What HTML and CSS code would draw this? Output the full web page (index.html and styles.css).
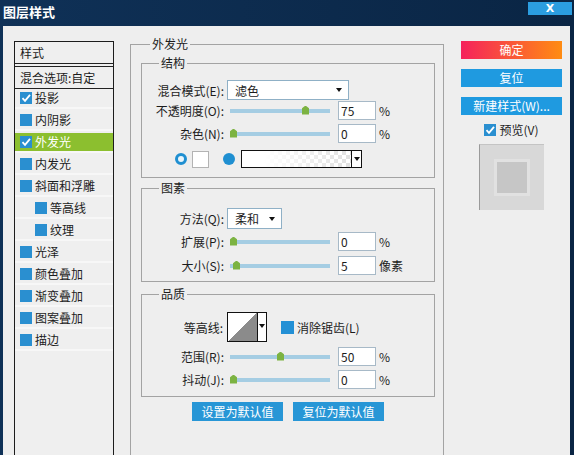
FILE: index.html
```html
<!DOCTYPE html>
<html lang="zh-CN">
<head>
<meta charset="utf-8">
<title>图层样式</title>
<link rel="stylesheet" href="styles.css">
</head>
<body>
<div class="window">
  <div class="titlebar">
    <span class="title">图层样式</span>
    <span class="close">X</span>
  </div>
  <div class="dialog">
    <div class="styles-panel">
      <div class="sp-head">样式</div>
      <div class="sp-sub">混合选项:自定</div>
      <ul class="sp-list">
        <li class="sp-item"><span class="cb"><svg viewBox="0 0 12 12"><path d="M2.5 6.2 L5 8.8 L10 2.8" fill="none" stroke="#fff" stroke-width="1.8"/></svg></span>投影</li>
        <li class="sp-item"><span class="cb"></span>内阴影</li>
        <li class="sp-item active"><span class="cb"><svg viewBox="0 0 12 12"><path d="M2.5 6.2 L5 8.8 L10 2.8" fill="none" stroke="#fff" stroke-width="1.8"/></svg></span>外发光</li>
        <li class="sp-item"><span class="cb"></span>内发光</li>
        <li class="sp-item"><span class="cb"></span>斜面和浮雕</li>
        <li class="sp-item sub"><span class="cb"></span>等高线</li>
        <li class="sp-item sub"><span class="cb"></span>纹理</li>
        <li class="sp-item"><span class="cb"></span>光泽</li>
        <li class="sp-item"><span class="cb"></span>颜色叠加</li>
        <li class="sp-item"><span class="cb"></span>渐变叠加</li>
        <li class="sp-item"><span class="cb"></span>图案叠加</li>
        <li class="sp-item"><span class="cb"></span>描边</li>
      </ul>
    </div>

    <div class="main">
      <fieldset class="group outer">
        <legend class="lg-outer">外发光</legend>

        <fieldset class="group g-struct">
          <legend class="lg-inner">结构</legend>
          <div class="row r1">
            <span class="lbl">混合模式(E):</span>
            <div class="select s-blend"><span>滤色</span><i class="arrow"></i></div>
          </div>
          <div class="row r2">
            <span class="lbl">不透明度(O):</span>
            <div class="slider"><div class="track"></div><i class="thumb" style="left:72px"></i></div>
            <div class="num">75</div><span class="unit">%</span>
          </div>
          <div class="row r3">
            <span class="lbl">杂色(N):</span>
            <div class="slider"><div class="track"></div><i class="thumb" style="left:0px"></i></div>
            <div class="num">0</div><span class="unit">%</span>
          </div>
          <div class="row r4">
            <span class="ring"></span>
            <span class="swatch"></span>
            <span class="dot"></span>
            <div class="gradbox"><div class="grad-fill"></div><div class="grad-drop"><i class="arrow"></i></div></div>
          </div>
        </fieldset>

        <fieldset class="group g-elem">
          <legend class="lg-inner">图素</legend>
          <div class="row e1">
            <span class="lbl">方法(Q):</span>
            <div class="select s-method"><span>柔和</span><i class="arrow"></i></div>
          </div>
          <div class="row e2">
            <span class="lbl">扩展(P):</span>
            <div class="slider"><div class="track"></div><i class="thumb" style="left:0px"></i></div>
            <div class="num">0</div><span class="unit">%</span>
          </div>
          <div class="row e3">
            <span class="lbl">大小(S):</span>
            <div class="slider"><div class="track"></div><i class="thumb" style="left:3px"></i></div>
            <div class="num">5</div><span class="unit">像素</span>
          </div>
        </fieldset>

        <fieldset class="group g-qual">
          <legend class="lg-inner">品质</legend>
          <div class="row q1">
            <span class="lbl lbl-c">等高线:</span>
            <div class="contour"><div class="contour-graph"></div><div class="contour-drop"><i class="arrow"></i></div></div>
            <span class="cb cb13"></span><span class="cb-text">消除锯齿(L)</span>
          </div>
          <div class="row q2">
            <span class="lbl">范围(R):</span>
            <div class="slider"><div class="track"></div><i class="thumb" style="left:47px"></i></div>
            <div class="num">50</div><span class="unit">%</span>
          </div>
          <div class="row q3">
            <span class="lbl">抖动(J):</span>
            <div class="slider"><div class="track"></div><i class="thumb" style="left:0px"></i></div>
            <div class="num">0</div><span class="unit">%</span>
          </div>
        </fieldset>

        <div class="defaults">
          <span class="btn-d">设置为默认值</span>
          <span class="btn-d">复位为默认值</span>
        </div>
      </fieldset>
    </div>

    <div class="side">
      <span class="btn-r ok">确定</span>
      <span class="btn-r">复位</span>
      <span class="btn-r last">新建样式(W)...</span>
      <div class="preview-check"><span class="cb"><svg viewBox="0 0 12 12"><path d="M2.5 6.2 L5 8.8 L10 2.8" fill="none" stroke="#fff" stroke-width="1.8"/></svg></span>预览(V)</div>
      <div class="preview"><div class="preview-inner"></div></div>
    </div>
  </div>
</div>
</body>
</html>
```

FILE: styles.css
```css
* { box-sizing: border-box; margin: 0; padding: 0; }

body {
  width: 574px;
  height: 455px;
  overflow: hidden;
  background: #0b2746;
  font-family: "Noto Sans CJK SC", "Noto Sans", sans-serif;
  font-size: 12px;
  color: #1c1c1c;
}

.window {
  width: 574px;
  height: 455px;
  display: flex;
  flex-direction: column;
  background: linear-gradient(to right, #0f3157, #0a2544);
  overflow: hidden;
}

.titlebar {
  height: 26px;
  flex: none;
  display: flex;
  justify-content: space-between;
  align-items: flex-start;
  padding: 0 2px 0 3px;
}

.title {
  color: #fff;
  font-weight: bold;
  font-size: 13px;
  line-height: 24px;
}

.close {
  margin-top: 2px;
  width: 44px;
  height: 13px;
  background: #2b9de0;
  color: #fff;
  font-family: "DejaVu Sans", sans-serif;
  font-weight: bold;
  font-size: 11px;
  line-height: 13px;
  text-align: center;
}

.dialog {
  flex: 1;
  margin: 0 4px 0 3px;
  background: #eeeeee;
  display: flex;
  align-items: flex-start;
  padding: 10px 0 0 11px;
  overflow: hidden;
}

/* left style list */
.styles-panel {
  flex: none;
  width: 100px;
  height: 460px;
  margin-top: 5px;
  border: 1px solid #1c1c1c;
  background: #efefef;
}

.sp-head {
  height: 22px;
  line-height: 21px;
  padding-left: 5px;
  border-bottom: 1px solid #222;
}

.sp-sub {
  margin-top: 2px;
  height: 23px;
  line-height: 21px;
  padding-left: 5px;
  border-top: 1px solid #222;
  border-bottom: 1px solid #222;
}

.sp-list { list-style: none; }

.sp-item {
  height: 18px;
  margin-bottom: 4px;
  display: flex;
  align-items: center;
  padding-left: 5px;
  line-height: 18px;
  box-shadow: 0 2px 0 #f7f7f7;
}

.sp-item.sub { padding-left: 20px; }

.sp-item.active {
  background: #8cbf2f;
  color: #fff;
}

.cb {
  flex: none;
  width: 12px;
  height: 12px;
  background: #2a8fd0;
  margin-right: 3px;
  display: block;
}

.cb svg { display: block; width: 12px; height: 12px; }

/* middle */
.main {
  flex: none;
  width: 314px;
  margin-left: 16px;
}

.group {
  border: 1px solid #a3a3a3;
  min-width: 0;
}

.group legend {
  line-height: 16px;
  font-size: 12px;
  padding: 0 2px;
}

.outer {
  height: 440px;
  padding: 0 8px 0 10px;
}

.lg-outer { margin-left: 9px; }
.lg-inner { margin-left: 17px; }

.g-struct { margin-top: 3px; padding: 9px 0 9px 0; }
.g-elem { margin-top: 2px; padding: 12px 0 6px 0; }
.g-qual { margin-top: 4px; padding: 10px 0 7px 0; }

.row {
  display: flex;
  align-items: center;
  height: 19px;
}

.r1 { height: 20px; }
.r2 { margin-top: 1px; }
.r3 { margin-top: 4px; }
.r4 { margin-top: 7px; height: 18px; padding-left: 33px; }

.e1 { height: 21px; }
.e2 { margin-top: 3px; }
.e3 { margin-top: 5px; }

.q1 { height: 30px; }
.q2 { margin-top: 5px; }
.q3 { margin-top: 4px; }

.lbl {
  flex: none;
  width: 82px;
  text-align: right;
  white-space: nowrap;
}

.lbl-c { width: 81px; }

.select {
  margin-left: 3px;
  height: 100%;
  background: #fff;
  border: 1px solid #8fb0c6;
  display: flex;
  align-items: center;
  justify-content: space-between;
  padding: 0 6px 0 7px;
}

.s-blend { width: 122px; }
.s-method { width: 55px; }

.arrow {
  display: block;
  width: 0;
  height: 0;
  border-left: 3.5px solid transparent;
  border-right: 3.5px solid transparent;
  border-top: 4px solid #111;
}

.slider {
  position: relative;
  flex: none;
  width: 100px;
  height: 10px;
  margin-left: 6px;
  display: flex;
  align-items: center;
}

.track {
  width: 100%;
  height: 4px;
  background: #a5cde3;
}

.thumb {
  position: absolute;
  top: 0;
  width: 7px;
  height: 9px;
  background: #7cb342;
  clip-path: polygon(50% 0, 100% 30%, 100% 100%, 0 100%, 0 30%);
}

.num {
  flex: none;
  margin-left: 8px;
  width: 38px;
  height: 19px;
  background: #fff;
  border: 1px solid #a7b9c7;
  padding-left: 2px;
  line-height: 17px;
}

.unit { margin-left: 3px; }

.ring {
  flex: none;
  width: 12px;
  height: 12px;
  border-radius: 50%;
  border: 3px solid #1f8fd1;
  background: #e9f5fb;
}

.swatch {
  flex: none;
  margin-left: 5px;
  width: 17px;
  height: 17px;
  background: #fff;
  border: 1px solid #b3b3b3;
}

.dot {
  flex: none;
  margin-left: 14px;
  width: 12px;
  height: 12px;
  border-radius: 50%;
  background: #1f8fd1;
}

.gradbox {
  flex: none;
  margin-left: 6px;
  width: 121px;
  height: 18px;
  border: 1px solid #111;
  display: flex;
}

.grad-fill {
  flex: 1;
  background:
    linear-gradient(to right, #fff 20%, rgba(255,255,255,0.2)),
    conic-gradient(#d9d9d9 25%, #fff 0 50%, #d9d9d9 0 75%, #fff 0) 0 0 / 8px 8px;
}

.grad-drop {
  width: 10px;
  border-left: 1px solid #111;
  background: #fff;
  display: flex;
  align-items: center;
  justify-content: center;
}

.grad-drop .arrow,
.contour-drop .arrow {
  border-left-width: 3px;
  border-right-width: 3px;
  border-top-width: 4px;
}

.contour {
  flex: none;
  margin-left: 4px;
  width: 40px;
  height: 30px;
  border: 1px solid #111;
  display: flex;
}

.contour-graph {
  width: 29px;
  background: linear-gradient(to top left, #8b8b8b 50%, #fff 50%);
}

.contour-drop {
  flex: 1;
  border-left: 1px solid #111;
  background: #fff;
  display: flex;
  justify-content: center;
  padding-top: 11px;
}

.cb13 {
  width: 13px;
  height: 13px;
  margin-left: 14px;
  margin-right: 3px;
  background: #2390d5;
}

.defaults {
  margin-top: 5px;
  display: flex;
  justify-content: center;
  gap: 10px;
}

.btn-d {
  width: 91px;
  height: 19px;
  line-height: 19px;
  text-align: center;
  background: #2796d6;
  color: #fff;
}

/* right */
.side {
  flex: none;
  width: 101px;
  margin-left: 17px;
  margin-top: 5px;
  display: flex;
  flex-direction: column;
  align-items: center;
}

.btn-r {
  width: 101px;
  height: 18px;
  line-height: 18px;
  margin-bottom: 10px;
  text-align: center;
  color: #fff;
  background: #1f9ae0;
  white-space: nowrap;
}

.btn-r.last { margin-bottom: 0; }

.ok { background: linear-gradient(to right, #f5225c, #ff8c12); }

.preview-check {
  margin-top: 8px;
  height: 14px;
  display: flex;
  align-items: center;
  line-height: 14px;
}

.preview {
  margin-top: 7px;
  width: 65px;
  height: 66px;
  background: #d8d8d8;
  border-left: 1px solid #9a9a9a;
  border-top: 1px solid #c4c4c4;
  display: flex;
  align-items: center;
  justify-content: center;
}

.preview-inner {
  width: 30px;
  height: 31px;
  background: #c6c6c6;
  box-shadow: 0 0 0 3px #e1e1e1;
}
```
